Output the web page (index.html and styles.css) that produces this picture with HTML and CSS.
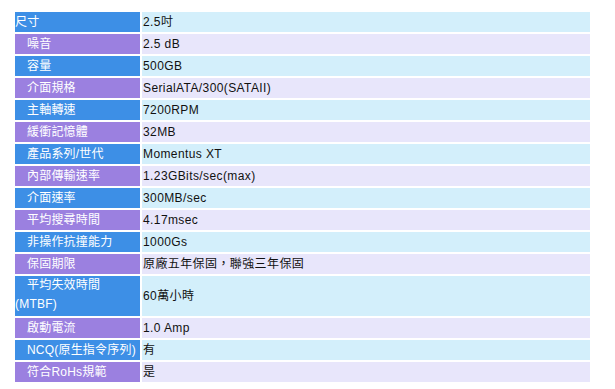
FILE: index.html
```html
<!DOCTYPE html>
<html lang="zh-Hant">
<head>
<meta charset="utf-8">
<title>規格</title>
<link rel="stylesheet" href="styles.css">
</head>
<body>
<div class="spec">
  <div class="lbl blue first">尺寸</div><div class="val cyan">2.5吋</div>
  <div class="lbl purple">噪音</div><div class="val lav">2.5 dB</div>
  <div class="lbl blue">容量</div><div class="val cyan">500GB</div>
  <div class="lbl purple">介面規格</div><div class="val lav">SerialATA/300(SATAII)</div>
  <div class="lbl blue">主軸轉速</div><div class="val cyan">7200RPM</div>
  <div class="lbl purple">緩衝記憶體</div><div class="val lav">32MB</div>
  <div class="lbl blue">產品系列/世代</div><div class="val cyan">Momentus XT</div>
  <div class="lbl purple">內部傳輸速率</div><div class="val lav">1.23GBits/sec(max)</div>
  <div class="lbl blue">介面速率</div><div class="val cyan">300MB/sec</div>
  <div class="lbl purple">平均搜尋時間</div><div class="val lav">4.17msec</div>
  <div class="lbl blue">非操作抗撞能力</div><div class="val cyan">1000Gs</div>
  <div class="lbl purple">保固期限</div><div class="val lav">原廠五年保固，聯強三年保固</div>
  <div class="lbl blue tall">平均失效時間<br>(MTBF)</div><div class="val cyan tall">60萬小時</div>
  <div class="lbl purple">啟動電流</div><div class="val lav">1.0 Amp</div>
  <div class="lbl blue">NCQ(原生指令序列)</div><div class="val cyan">有</div>
  <div class="lbl purple">符合RoHs規範</div><div class="val lav">是</div>
</div>
</body>
</html>
```

FILE: styles.css
```css
html, body {
  margin: 0;
  padding: 0;
  background: #ffffff;
}

.spec {
  display: grid;
  grid-template-columns: 125px 448px;
  gap: 2px;
  margin: 12px 0 0 15px;
  font-family: "Liberation Sans", Arial, "Noto Sans CJK TC", sans-serif;
  font-size: 12px;
  letter-spacing: 0.4px;
}

.lbl, .val {
  height: 20px;
  line-height: 20px;
  white-space: nowrap;
}

.lbl {
  color: #ffffff;
  text-indent: 12px;
  letter-spacing: 0.2px;
}

.lbl.first {
  text-indent: 0;
}

.val {
  color: #111111;
  padding-left: 1px;
}

.lbl.tall {
  height: 40px;
  line-height: 19px;
  padding-top: 0;
  box-sizing: border-box;
}

.val.tall {
  height: 40px;
  line-height: 40px;
}

.blue { background: #3d8fe6; }
.purple { background: #9b80e0; }
.cyan { background: #d3effb; }
.lav { background: #e8e6fb; }
```
